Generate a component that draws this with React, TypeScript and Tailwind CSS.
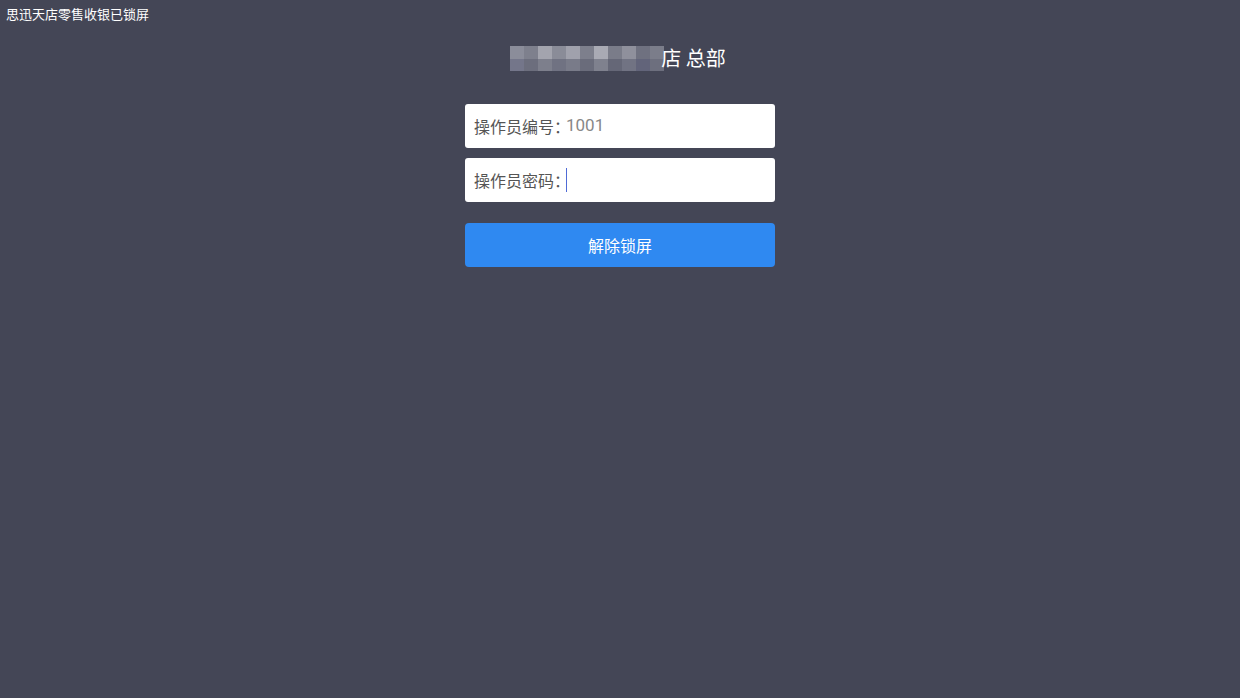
import { useState } from "react"

const font = { fontFamily: '"Noto Sans CJK SC", Roboto, sans-serif' }

// pixelated redaction in the store name
const mosaicTop = ["#8b8d9a", "#7e808d", "#a3a4ae", "#8a8c98", "#a0a1ac", "#7d7f8c", "#a9aab4", "#7a7c89", "#8f909c", "#6f7180", "#7b7d8a"]
const mosaicBottom = ["#74768a", "#6c6e7d", "#7d7f8c", "#707282", "#797b89", "#6a6c7b", "#7f818e", "#656777", "#717383", "#62647a", "#6d6f7e"]

const Mosaic = () => (
  <div className="flex flex-col mr-[-3px]">
    <div className="flex">
      {mosaicTop.map((c, i) => (
        <div key={i} className="w-[14px] h-[13px]" style={{ backgroundColor: c }} />
      ))}
    </div>
    <div className="flex">
      {mosaicBottom.map((c, i) => (
        <div key={i} className="w-[14px] h-[12px]" style={{ backgroundColor: c }} />
      ))}
    </div>
  </div>
)

const App = () => {
  const [code, setCode] = useState("1001")
  const [pwd, setPwd] = useState("")

  return (
    <div className="w-full h-[698px] bg-[#444656] text-white" style={font}>
      <div className="px-[6px] pt-[4px] text-[13px] leading-[20px]">思迅天店零售收银已锁屏</div>
      <div className="flex flex-col items-center">
        <div className="flex items-center mt-[20px] h-[28px] -ml-[4px]">
          <Mosaic />
          <span className="text-[20px] leading-[28px] text-white">店 总部</span>
        </div>
        <div className="w-[310px] mt-[32px] flex flex-col">
          <label className="h-[44px] bg-white rounded-[3px] flex items-center px-[9px] text-[16px] text-[#555]">
            <span className="shrink-0 whitespace-nowrap">操作员编号：</span>
            <input
              className="flex-1 min-w-0 outline-none text-[#888] text-[17px] bg-transparent -ml-[4px]"
              value={code}
              onChange={(e) => setCode(e.target.value)}
              style={{ fontFamily: "Roboto, sans-serif" }}
            />
          </label>
          <label className="h-[44px] bg-white rounded-[3px] flex items-center px-[9px] mt-[10px] text-[16px] text-[#555]">
            <span className="shrink-0 whitespace-nowrap">操作员密码：</span>
            <div className="shrink-0 w-[1px] h-[24px] bg-[#4f6bd6] -ml-[4px]" />
            <input
              type="password"
              className="flex-1 min-w-0 outline-none bg-transparent"
              value={pwd}
              onChange={(e) => setPwd(e.target.value)}
            />
          </label>
          <button className="h-[44px] mt-[21px] rounded-[4px] bg-[#2f89f1] text-white text-[16px]">
            解除锁屏
          </button>
        </div>
      </div>
    </div>
  )
}

export default App
